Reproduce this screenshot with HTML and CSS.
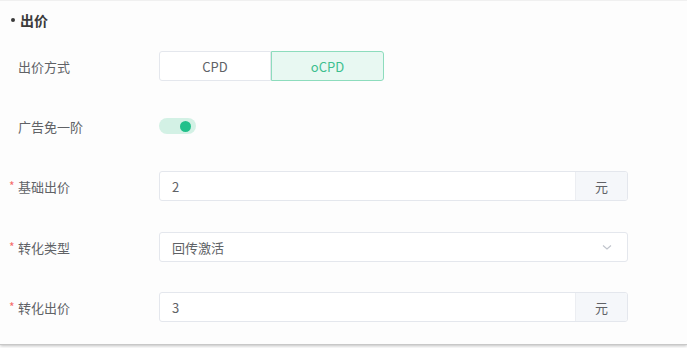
FILE: index.html
```html
<!DOCTYPE html>
<html lang="zh-CN">
<head>
    <meta charset="UTF-8">
    <title>出价</title>
    <link rel="stylesheet" href="styles.css">
</head>
<body>
    <div class="panel">
        <div class="section-title"><span class="dot"></span>出价</div>

        <div class="form-row">
            <div class="label">出价方式</div>
            <div class="segmented">
                <button class="seg-btn">CPD</button>
                <button class="seg-btn active">oCPD</button>
            </div>
        </div>

        <div class="form-row">
            <div class="label">广告免一阶</div>
            <div class="switch on"><span class="knob"></span></div>
        </div>

        <div class="form-row spaced">
            <div class="label required">基础出价</div>
            <div class="input-group">
                <div class="input">2</div>
                <div class="addon">元</div>
            </div>
        </div>

        <div class="form-row">
            <div class="label required">转化类型</div>
            <div class="select">
                <span>回传激活</span>
                <svg class="arrow" width="12" height="12" viewBox="0 0 12 12"><path d="M2 4.5 L6 8 L10 4.5" fill="none" stroke="#c0c4cc" stroke-width="1.1"/></svg>
            </div>
        </div>

        <div class="form-row">
            <div class="label required">转化出价</div>
            <div class="input-group">
                <div class="input">3</div>
                <div class="addon">元</div>
            </div>
        </div>
    </div>
</body>
</html>
```

FILE: styles.css
```css
* {
    margin: 0;
    padding: 0;
    box-sizing: border-box;
}

body {
    font-family: "Noto Sans CJK SC", "Noto Sans", sans-serif;
    background: #ffffff;
    color: #606266;
    width: 687px;
    height: 348px;
    overflow: hidden;
}

.panel {
    height: 345px;
    background: #fdfdfd;
    border-top: 1px solid #f0f0f0;
    border-bottom: 1px solid #c8c8c8;
    box-shadow: 0 1px 3px rgba(0,0,0,0.25);
}

.section-title {
    display: flex;
    align-items: center;
    height: 20px;
    margin-top: 9px;
    margin-bottom: 21px;
    padding-left: 11px;
    font-size: 14px;
    font-weight: 700;
    color: #3a3a3a;
}

.dot {
    width: 4px;
    height: 4px;
    border-radius: 50%;
    background: #3a3a3a;
    margin-right: 5px;
}

.form-row {
    display: flex;
    align-items: center;
    height: 30px;
    margin-bottom: 30px;
}

.form-row.spaced {
    margin-bottom: 31px;
}

.label {
    width: 159px;
    padding-left: 18px;
    font-size: 13px;
    color: #606266;
    position: relative;
}

.label.required::before {
    content: "*";
    position: absolute;
    left: 9px;
    top: 0;
    color: #f56c6c;
    font-size: 12px;
}

.segmented {
    display: flex;
    height: 30px;
}

.seg-btn {
    width: 112px;
    height: 30px;
    background: #ffffff;
    border: 1px solid #e4e7ed;
    border-radius: 3px 0 0 3px;
    font-family: inherit;
    font-size: 13px;
    color: #606266;
}

.seg-btn.active {
    width: 113px;
    background: #e8f8f2;
    border-color: #8ddcbd;
    border-radius: 0 3px 3px 0;
    color: #3dbf8f;
}

.switch {
    width: 37px;
    height: 16px;
    border-radius: 8px;
    background: #d3f1e5;
    position: relative;
}

.switch .knob {
    position: absolute;
    right: 5px;
    top: 2.5px;
    width: 11px;
    height: 11px;
    border-radius: 50%;
    background: #22c08b;
}

.input-group {
    display: flex;
    width: 469px;
    height: 30px;
    border: 1px solid #e4e7ed;
    border-radius: 3px;
    background: #ffffff;
    overflow: hidden;
}

.input {
    flex: 1;
    display: flex;
    align-items: center;
    padding-left: 12px;
    font-size: 13px;
    color: #606266;
}

.addon {
    width: 52px;
    display: flex;
    align-items: center;
    justify-content: center;
    background: #f5f7fa;
    border-left: 1px solid #eceef2;
    font-size: 13px;
    color: #606266;
}

.select {
    display: flex;
    align-items: center;
    justify-content: space-between;
    width: 469px;
    height: 30px;
    padding: 0 14px 0 12px;
    border: 1px solid #e4e7ed;
    border-radius: 3px;
    background: #ffffff;
    font-size: 13px;
    color: #606266;
}
```
